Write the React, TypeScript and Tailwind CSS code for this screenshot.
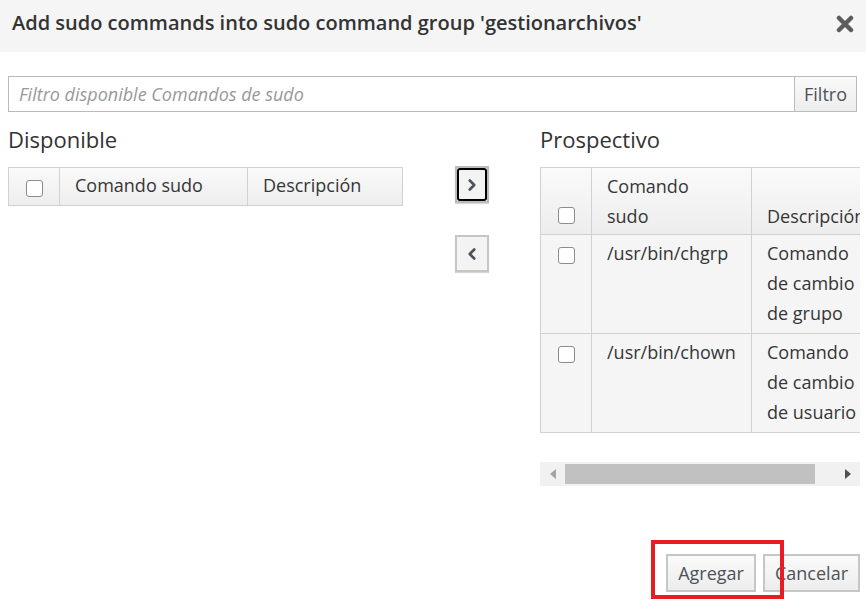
import { ChevronLeft, ChevronRight } from "lucide-react";

const font = { fontFamily: '"Open Sans", "Liberation Sans", sans-serif' };

const Check = () => (
  <span className="inline-block w-[17px] h-[17px] rounded-[3px] border border-[#8c8c8c] bg-white align-middle" />
);

const prospect = [
  { cmd: "/usr/bin/chgrp", desc: ["Comando", "de cambio", "de grupo"] },
  { cmd: "/usr/bin/chown", desc: ["Comando", "de cambio", "de usuario"] },
];

export default function App() {
  return (
    <div className="w-[866px] h-[606px] bg-white text-[#363636] overflow-hidden relative" style={font}>
      {/* header */}
      <div className="h-[52px] bg-[#f5f5f5] flex items-center justify-between pl-[12px] pr-[12px]">
        <h1 className="text-[20px] font-semibold text-[#333] -mt-[6px]">
          Add sudo commands into sudo command group 'gestionarchivos'
        </h1>
        <svg width="18" height="18" viewBox="0 0 18 18" className="-mt-[4px]">
          <path d="M3 3 L15 15 M15 3 L3 15" stroke="#5c5c5c" strokeWidth="4.5" strokeLinecap="round" />
        </svg>
      </div>

      {/* filter */}
      <div className="flex mt-[24px] mx-[8px] mr-[9px] h-[36px]">
        <div className="flex-1 border border-[#bbb] flex items-center px-[10px] text-[18px] italic text-[#999]">
          Filtro disponible Comandos de sudo
        </div>
        <button className="w-[62px] border border-[#bbb] border-l-0 bg-gradient-to-b from-[#fafafa] to-[#ededed] text-[18px] text-[#4d5258]">
          Filtro
        </button>
      </div>

      <div className="flex mt-[12px]">
        {/* left */}
        <div className="w-[403px] pl-[8px]">
          <div className="text-[22px] leading-[30px] text-[#333]">Disponible</div>
          <table className="mt-[13px] border-collapse text-[18px] w-[395px]">
            <thead>
              <tr className="bg-gradient-to-b from-[#fafafa] to-[#ededed] h-[38px]">
                <th className="w-[51px] border border-[#d1d1d1] text-center font-normal"><Check /></th>
                <th className="w-[188px] border border-[#d1d1d1] text-left font-normal pl-[15px] pb-[2px]">Comando sudo</th>
                <th className="border border-[#d1d1d1] text-left font-normal pl-[15px] pb-[2px]">Descripción</th>
              </tr>
            </thead>
          </table>
        </div>

        {/* arrows */}
        <div className="w-[137px] flex flex-col pl-[52px] pt-[42px] gap-[32px]">
          <button className="w-[34px] h-[37px] border-2 border-[#bbb] bg-[#f3f3f3] flex items-center justify-center shadow-[0_1px_1px_rgba(0,0,0,0.15)]">
            <span className="w-[30px] h-[33px] border-2 border-black rounded-[3px] flex items-center justify-center">
              <ChevronRight size={18} strokeWidth={3.5} color="#4d5258" />
            </span>
          </button>
          <button className="w-[34px] h-[37px] border-2 border-[#c6c6c6] bg-[#f3f3f3] flex items-center justify-center shadow-[0_1px_1px_rgba(0,0,0,0.15)]">
            <ChevronLeft size={18} strokeWidth={3.5} color="#4d5258" />
          </button>
        </div>

        {/* right */}
        <div className="flex-1 min-w-0 pr-[6px]">
          <div className="text-[22px] leading-[30px] text-[#333]">Prospectivo</div>
          <div className="mt-[13px] overflow-hidden">
            <table className="border-collapse text-[18px] leading-[30px] w-[420px]">
              <thead>
                <tr className="bg-gradient-to-b from-[#fafafa] to-[#ededed]">
                  <th className="w-[51px] border border-[#d1d1d1] text-center font-normal align-bottom pb-[6px]"><Check /></th>
                  <th className="w-[160px] border border-[#d1d1d1] text-left font-normal pl-[15px] pt-[3px] pb-[3px] align-bottom">
                    Comando<br />sudo
                  </th>
                  <th className="border border-[#d1d1d1] text-left font-normal pl-[15px] pb-[3px] align-bottom whitespace-nowrap">
                    Descripción
                  </th>
                </tr>
              </thead>
              <tbody>
                {prospect.map((r) => (
                  <tr key={r.cmd} className="bg-[#f5f5f5]">
                    <td className="border border-[#d1d1d1] text-center align-top pt-[3px]"><Check /></td>
                    <td className="border border-[#d1d1d1] align-top pl-[15px] pt-[3px] pb-[5px]">{r.cmd}</td>
                    <td className="border border-[#d1d1d1] align-top pl-[15px] pt-[3px] pb-[5px]">
                      {r.desc.map((d) => (
                        <div key={d}>{d}</div>
                      ))}
                    </td>
                  </tr>
                ))}
              </tbody>
            </table>
          </div>

          {/* scrollbar */}
          <div className="mt-[29px] h-[24px] bg-[#f1f1f1] flex items-center">
            <span className="w-[25px] flex justify-center">
              <svg width="6" height="10" viewBox="0 0 6 10"><path d="M6 0 L0 5 L6 10 Z" fill="#a3a3a3" /></svg>
            </span>
            <span className="w-[250px] h-[20px] bg-[#c1c1c1]" />
            <span className="flex-1" />
            <span className="w-[25px] flex justify-center">
              <svg width="6" height="10" viewBox="0 0 6 10"><path d="M0 0 L6 5 L0 10 Z" fill="#505050" /></svg>
            </span>
          </div>
        </div>
      </div>

      {/* footer */}
      <div className="absolute right-[6px] top-[554px] flex gap-[7px]">
        <button className="h-[38px] px-[10px] border-2 border-[#c6c6c6] bg-gradient-to-b from-[#fafafa] to-[#ededed] text-[18px] text-[#4d5258]">
          Agregar
        </button>
        <button className="h-[38px] px-[10px] border-2 border-[#c6c6c6] bg-gradient-to-b from-[#fafafa] to-[#ededed] text-[18px] text-[#4d5258]">
          Cancelar
        </button>
      </div>
      <div className="absolute left-[651px] top-[540px] w-[133px] h-[59px] border-[4px] border-[#e81c24]" />
    </div>
  );
}
